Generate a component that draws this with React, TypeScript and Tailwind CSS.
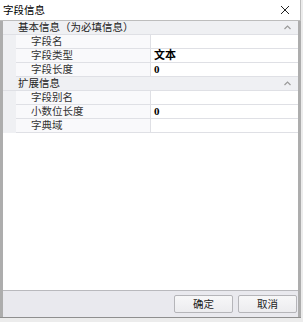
import React from 'react';

interface Row {
  label: string;
  value?: string;
}

interface Section {
  title: string;
  rows: Row[];
}

const sections: Section[] = [
  {
    title: '基本信息（为必填信息）',
    rows: [
      { label: '字段名' },
      { label: '字段类型', value: '文本' },
      { label: '字段长度', value: '0' },
    ],
  },
  {
    title: '扩展信息',
    rows: [
      { label: '字段别名' },
      { label: '小数位长度', value: '0' },
      { label: '字典域' },
    ],
  },
];

const Chevron = () => (
  <svg width="7" height="5" viewBox="0 0 7 5" className="text-[#9a9a9a]">
    <path d="M0.5 4 L3.5 1 L6.5 4" fill="none" stroke="currentColor" strokeWidth={1.2} />
  </svg>
);

const SectionBlock: React.FC<{ section: Section }> = ({ section }) => (
  <div className="flex flex-col">
    <div className="h-[14px] flex items-center justify-between pl-[15px] pr-[7px] bg-[#eff0f3] border-b border-[#dfe0e5] text-[#222]">
      <span>{section.title}</span>
      <Chevron />
    </div>
    {section.rows.map((row, i) => (
      <div key={i} className="h-[14px] flex bg-[#eff0f3]">
        <div className="w-[13px]" />
        <div className="w-[135px] flex items-center pl-[15px] bg-[#f9f9fb] border-b border-r border-[#dfe0e5] text-[#333]">
          {row.label}
        </div>
        <div className="flex-1 flex items-center pl-[3px] bg-white border-b border-[#dfe0e5] text-[11px] font-bold text-black [font-family:'Liberation_Serif','Noto_Sans_CJK_SC',serif]">
          {row.value}
        </div>
      </div>
    ))}
  </div>
);

const Button: React.FC<{ label: string }> = ({ label }) => (
  <button className="w-[59px] h-[18px] flex items-center justify-center border border-[#b5b5b9] rounded-[2px] bg-gradient-to-b from-[#f7f7f8] to-[#ececef] text-[#222]">
    {label}
  </button>
);

export default function App() {
  return (
    <div className="w-[303px] h-[322px] bg-[#ececec] text-[10.5px] leading-none [font-family:'Noto_Sans_CJK_SC',sans-serif]">
      <div className="w-[301px] h-[318px] flex flex-col bg-white border-b border-[#8f8f8f]">
        <div className="h-[21px] flex items-center justify-between pl-[3px] pr-[10px] border-b border-r border-[#bdbdbd] text-black">
          <span>字段信息</span>
          <svg width="10" height="10" viewBox="0 0 10 10">
            <path d="M1 1 L9 9 M9 1 L1 9" stroke="#222" strokeWidth={1} />
          </svg>
        </div>
        <div className="flex-1 flex flex-col border-l-[3px] border-r-[3px] border-[#adadad]">
          <div className="flex-1 flex flex-col bg-white">
            {sections.map((s, i) => (
              <SectionBlock key={i} section={s} />
            ))}
          </div>
          <div className="h-[27px] flex items-center justify-end gap-[5px] pr-[1px] bg-[#e9e9ee] border-t border-[#b9b9bd]">
            <Button label="确定" />
            <Button label="取消" />
          </div>
        </div>
      </div>
    </div>
  );
}
